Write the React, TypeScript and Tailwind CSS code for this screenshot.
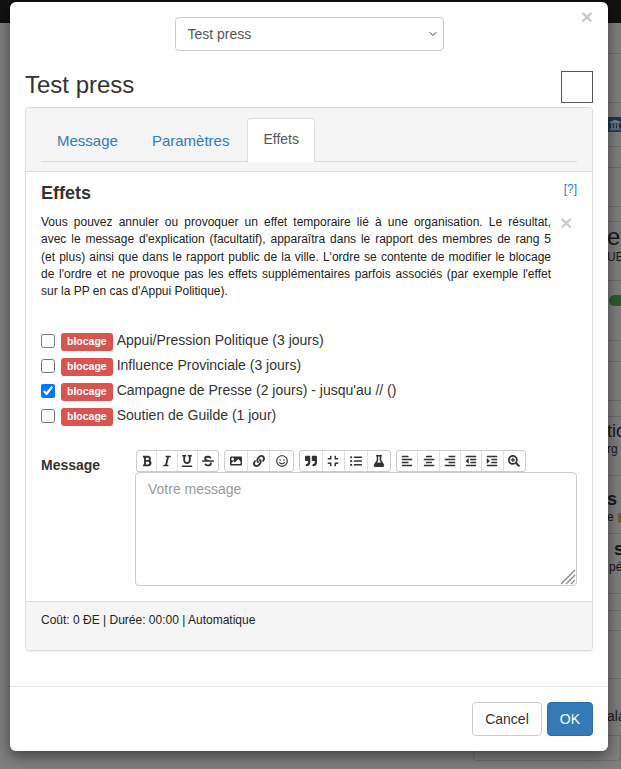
import React from 'react';
import { ChevronDown } from 'lucide-react';
import {
  FaBold, FaItalic, FaUnderline, FaStrikethrough, FaImage, FaLink, FaRegSmile,
  FaQuoteRight, FaCompress, FaListUl, FaFlask, FaAlignLeft, FaAlignCenter,
  FaAlignRight, FaOutdent, FaIndent, FaSearchPlus, FaUniversity,
} from 'react-icons/fa';

const toolbarGroups = [
  { width: 'w-[20.25px]', icons: [FaBold, FaItalic, FaUnderline, FaStrikethrough] },
  { width: 'w-[22.7px]', icons: [FaImage, FaLink, FaRegSmile] },
  { width: 'w-[22.5px]', icons: [FaQuoteRight, FaCompress, FaListUl, FaFlask] },
  { width: 'w-[21.3px]', icons: [FaAlignLeft, FaAlignCenter, FaAlignRight, FaOutdent, FaIndent, FaSearchPlus] },
];

const effects = [
  { label: 'Appui/Pression Politique (3 jours)', checked: false },
  { label: 'Influence Provinciale (3 jours)', checked: false },
  { label: "Campagne de Presse (2 jours) - jusqu'au // ()", checked: true },
  { label: 'Soutien de Guilde (1 jour)', checked: false },
];

const helpLines = [
  'Vous pouvez annuler ou provoquer un effet temporaire lié à une organisation. Le résultat,',
  "avec le message d'explication (facultatif), apparaîtra dans le rapport des membres de rang 5",
  "(et plus) ainsi que dans le rapport public de la ville. L'ordre se contente de modifier le blocage",
  "de l'ordre et ne provoque pas les effets supplémentaires parfois associés (par exemple l'effet",
];

function PageBehind() {
  return (
    <div className="h-[769px] overflow-hidden bg-white text-[#333]">
      <div className="flex h-[23px] items-end gap-[45px] bg-[#222] pb-[20px] pl-[6px] text-[14px] text-[#9d9d9d]">
        <span>Monde</span>
        <span>Forum</span>
        <span>Commandants</span>
        <span>Stats</span>
      </div>
      <div className="ml-[473px] flex flex-col">
        <div className="h-[31px] border-b border-[#ddd]" />
        <div className="h-[49px] border-b border-[#ddd]" />
        <div className="h-[44px] border-b border-[#ddd] pt-[14px]">
          <div className="flex h-[15px] items-center bg-[#2f6fa8] pl-[136px] text-[14px] text-white">
            <FaUniversity />
          </div>
        </div>
        <div className="h-[21px] border-b border-[#ddd]" />
        <div className="h-[39px] border-b border-[#ddd]" />
        <div className="h-[15px] border-b border-[#ddd]" />
        <div className="h-[59px] whitespace-nowrap border-b border-[#ddd] pl-[134px] pt-[2px]">
          <div className="text-[24px] leading-[26px]">et</div>
          <div className="text-[12px] leading-[14px]">UE</div>
        </div>
        <div className="h-[60px] border-b border-[#ddd] pl-[136px] pt-[14px]">
          <div className="h-[11px] rounded-l-full bg-[#5cb85c]" />
        </div>
        <div className="h-[21px] border-b border-[#ddd]" />
        <div className="h-[39px] border-b border-[#ddd]" />
        <div className="h-[16px] border-b border-[#ddd]" />
        <div className="h-[59px] whitespace-nowrap border-b border-[#ddd] pl-[134px] pt-[3px]">
          <div className="text-[18px] leading-[22px]">tio</div>
          <div className="text-[12px] leading-[14px]">rg</div>
        </div>
        <div className="h-[58px] whitespace-nowrap border-b border-[#ddd] pl-[134px] pt-[12px]">
          <div className="text-[18px] font-bold leading-[22px]">s</div>
          <div className="text-[12px] leading-[14px]">
            e <span className="text-[#f0ad4e]">▮</span>
          </div>
        </div>
        <div className="h-[60px] whitespace-nowrap border-b border-[#ddd] pl-[136px] pt-[4px]">
          <div className="text-[18px] font-bold leading-[22px]">&nbsp;s</div>
          <div className="text-[12px] leading-[14px]">péd</div>
        </div>
        <div className="h-[17px] border-b border-[#ddd]" />
        <div className="h-[20px] border-b border-[#ddd]" />
        <div className="h-[48px] border-b border-[#ddd]" />
        <div className="h-[57px] whitespace-nowrap border-b border-[#ddd] pl-[134px] pt-[27px] text-[14px] leading-[20px]">
          ala
        </div>
        <div className="h-[25px] rounded-b border-x border-b border-[#ddd]" />
      </div>
    </div>
  );
}

export default function App() {
  return (
    <div className="relative h-[769px] w-[621px] overflow-hidden font-['Liberation_Sans',Arial,sans-serif] text-[14px] leading-[20px] text-[#333]">
      <PageBehind />
      <div className="absolute inset-0 bg-black/50" />

      <div className="absolute left-[10px] top-[2px] flex h-[749px] w-[598px] flex-col rounded-[6px] bg-white shadow-[0_5px_15px_rgba(0,0,0,0.5)]">
        <div className="relative flex-1 px-[15px] pt-[15px]">
          <button className="absolute right-[15px] top-[4px] text-[21px] font-bold leading-[21px] text-black opacity-20">×</button>

          <div className="flex justify-center">
            <div className="relative w-[269px]">
              <select
                defaultValue="Test press"
                className="h-[34px] w-full appearance-none rounded border border-[#ccc] bg-white px-[12px] text-[14px] text-[#555]"
              >
                <option>Test press</option>
              </select>
              <ChevronDown size={12} strokeWidth={2} className="absolute right-[5px] top-[11px] text-[#444]" />
            </div>
          </div>

          <div className="mt-[20px] flex items-start justify-between">
            <h1 className="mt-[1px] text-[24px] font-normal leading-[26px]">Test press</h1>
            <div className="h-[32px] w-[32px] border border-[#555] bg-white" />
          </div>

          <div className="mt-[4px] rounded border border-[#ddd] bg-white shadow-[0_1px_1px_rgba(0,0,0,0.05)]">
            <div className="h-[64px] rounded-t border-b border-[#ddd] bg-[#f5f5f5] px-[15px] pt-[10px]">
              <div className="flex h-[44px] border-b border-[#ddd]">
                <a className="mt-[3px] px-[16px] pt-[10px] text-[15px] text-[#337ab7]">Message</a>
                <a className="mt-[3px] ml-[2px] px-[16px] pt-[10px] text-[15px] text-[#337ab7]">Paramètres</a>
                <a className="ml-[2px] h-[44px] rounded-t border border-b-0 border-[#ddd] bg-white px-[15px] pt-[10px] text-[#555]">Effets</a>
              </div>
            </div>

            <div className="h-[429px] px-[15px] pt-[11px]">
              <div className="flex items-start justify-between">
                <h3 className="text-[18px] font-bold leading-[20px]">Effets</h3>
                <a className="-mt-[4px] text-[12px] text-[#337ab7]">[?]</a>
              </div>
              <div className="mt-[11px] flex items-start">
                <p className="w-[510px] text-[12px] leading-[17.25px] text-[#222]">
                  {helpLines.map((line) => (
                    <span key={line} className="block text-justify [text-align-last:justify]">
                      {line}
                    </span>
                  ))}
                  <span className="block">sur la PP en cas d'Appui Politique).</span>
                </p>
                <button className="ml-[9px] text-[21px] font-bold leading-[17px] text-black opacity-20">×</button>
              </div>

              <div className="mt-[29px] flex flex-col">
                {effects.map((effect) => (
                  <label key={effect.label} className="flex h-[25px] items-center">
                    <input type="checkbox" defaultChecked={effect.checked} className="-mt-px h-[14px] w-[14px]" />
                    <span className="ml-[6px] rounded-[3px] bg-[#d9534f] px-[6px] pb-[3px] pt-[2px] text-[10.5px] font-bold leading-[13px] text-white">blocage</span>
                    <span className="-mt-[3px] ml-[4px]">{effect.label}</span>
                  </label>
                ))}
              </div>

              <div className="mt-[21px] flex">
                <label className="w-[94px] pt-[5px] font-bold">Message</label>
                <div className="flex-1">
                  <div className="ml-px flex h-[22px] gap-[5px]">
                    {toolbarGroups.map((group, i) => (
                      <div key={i} className="flex rounded-[3px] border border-[#ccc] bg-white">
                        {group.icons.map((Icon, j) => (
                          <span key={j} className={`flex ${group.width} items-center justify-center border-r border-[#e0e0e0] text-[12px] text-[#333] last:border-r-0`}>
                            <Icon />
                          </span>
                        ))}
                      </div>
                    ))}
                  </div>
                  <div className="relative w-[442px]">
                    <textarea
                      placeholder="Votre message"
                      className="block h-[114px] w-full resize-none rounded border border-[#ccc] bg-white px-[12px] py-[6px] text-[14px] leading-[20px] placeholder:text-[#999]"
                    />
                    <svg width="16" height="16" viewBox="0 0 16 16" className="absolute bottom-[1px] right-[1px]">
                      <path d="M1 15 15 1M6 15 15 6M11 15 15 11" stroke="#888" strokeWidth="1.3" fill="none" />
                    </svg>
                  </div>
                </div>
              </div>
            </div>

            <div className="h-[49px] rounded-b border-t border-[#ddd] bg-[#f5f5f5] px-[15px] pt-[10px] text-[12px] leading-[17px] text-[#222]">
              Coût: 0 ÐE | Durée: 00:00 | Automatique
            </div>
          </div>
        </div>

        <div className="flex h-[65px] justify-end gap-[5px] border-t border-[#e5e5e5] px-[15px] pt-[15px]">
          <button className="h-[34px] rounded border border-[#ccc] bg-white px-[12px] text-[14px] text-[#333]">Cancel</button>
          <button className="h-[34px] rounded border border-[#2e6da4] bg-[#337ab7] px-[12px] text-[14px] text-white">OK</button>
        </div>
      </div>
    </div>
  );
}
